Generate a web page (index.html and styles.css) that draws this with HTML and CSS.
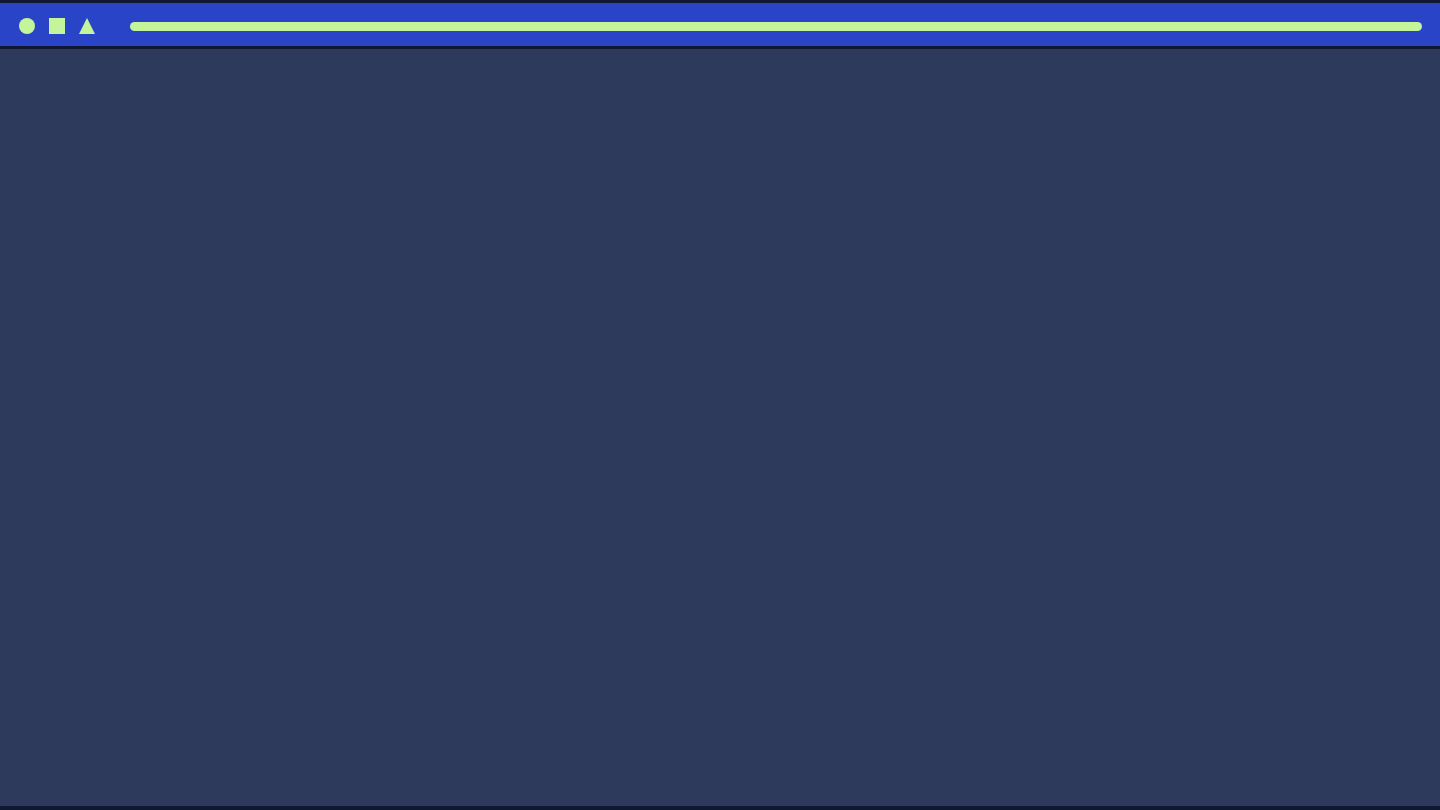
FILE: index.html
```html
<!DOCTYPE html>
<html>
<head>
<meta charset="utf-8">
<link rel="stylesheet" href="styles.css">
</head>
<body>
<div class="window">
  <header class="topbar">
    <div class="shapes">
      <span class="shape circle"></span>
      <span class="shape square"></span>
      <svg class="shape triangle" width="16" height="16" viewBox="0 0 16 16"><polygon points="8,0 16,16 0,16" fill="#c4f59b"/></svg>
    </div>
    <div class="progress"></div>
  </header>
  <main class="content"></main>
</div>
</body>
</html>
```

FILE: styles.css
```css
* { box-sizing: border-box; }
html, body {
  margin: 0;
  padding: 0;
  width: 1440px;
  height: 810px;
  overflow: hidden;
  background: #0f1733;
  font-family: "Liberation Sans", sans-serif;
}
.window {
  display: flex;
  flex-direction: column;
  height: 810px;
  border-top: 3px solid #0f1733;
  border-bottom: 4px solid #0f1733;
}
.topbar {
  height: 46px;
  background: #2a44c8;
  display: flex;
  align-items: center;
  padding: 3px 18px 0 19px;
  border-bottom: 3px solid #0f1733;
  flex: none;
}
.shapes {
  display: flex;
  align-items: center;
  gap: 14px;
  width: 111px;
  flex: none;
}
.shape {
  display: block;
  width: 16px;
  height: 16px;
  flex: none;
}
.circle {
  border-radius: 50%;
  background: #c4f59b;
}
.square {
  background: #c4f59b;
}
.progress {
  flex: 1;
  height: 9px;
  border-radius: 5px;
  background: #c4f59b;
}
.content {
  flex: 1;
  background: #2e3a5c;
}
```
